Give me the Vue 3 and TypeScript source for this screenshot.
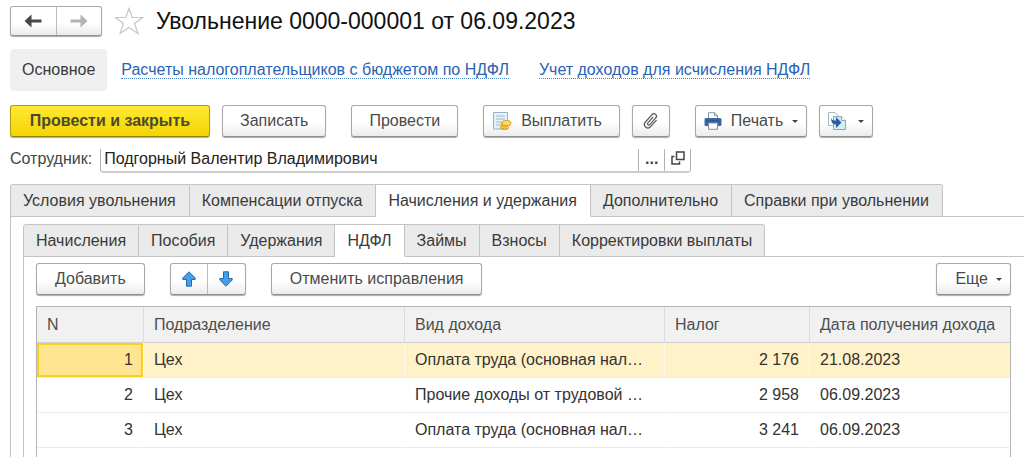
<script setup lang="ts">
import { ref } from 'vue'

interface IncomeRow {
  n: number
  department: string
  kind: string
  tax: string
  date: string
}

const employee = ref('Подгорный Валентир Владимирович')
const mainTabs = ['Условия увольнения', 'Компенсации отпуска', 'Начисления и удержания', 'Дополнительно', 'Справки при увольнении']
const subTabs = ['Начисления', 'Пособия', 'Удержания', 'НДФЛ', 'Займы', 'Взносы', 'Корректировки выплаты']
const activeMain = ref(2)
const activeSub = ref(3)
const selected = ref(1)

const rows: IncomeRow[] = [
  { n: 1, department: 'Цех', kind: 'Оплата труда (основная нал…', tax: '2 176', date: '21.08.2023' },
  { n: 2, department: 'Цех', kind: 'Прочие доходы от трудовой …', tax: '2 958', date: '06.09.2023' },
  { n: 3, department: 'Цех', kind: 'Оплата труда (основная нал…', tax: '3 241', date: '06.09.2023' },
]
</script>

<template>
  <div class="page">
    <header class="title-bar">
      <div class="pair nav">
        <button type="button" aria-label="Назад">
          <svg width="18" height="14" viewBox="0 0 18 14"><path d="M0.5 7 7.500 0.500V5.500H17.500V8.500H7.500V13.500Z" fill="#484848" /></svg>
        </button>
        <button type="button" aria-label="Вперед">
          <svg width="18" height="14" viewBox="0 0 18 14"><path d="M17.500 7 10.500 0.500V5.500H0.500V8.500H10.500V13.500Z" fill="#b3b3b3" /></svg>
        </button>
      </div>
      <button type="button" class="star" aria-label="В избранное">
        <svg width="30" height="28" viewBox="0 0 30 28"><path d="M15 1.500 18.200 10.500H28.500L20.500 16.500 24 26.500 15 20.500 6 26.500 9.500 16.500 1.500 10.500H11.800Z" fill="#fff" stroke="#c6c6c6" stroke-width="1.200" /></svg>
      </button>
      <h1>Увольнение 0000-000001 от 06.09.2023</h1>
    </header>

    <nav class="sections">
      <span class="current">Основное</span>
      <a href="#budget">Расчеты налогоплательщиков с бюджетом по НДФЛ</a>
      <a href="#income">Учет доходов для исчисления НДФЛ</a>
    </nav>

    <div class="toolbar">
      <button type="button" class="btn primary">Провести и закрыть</button>
      <button type="button" class="btn">Записать</button>
      <button type="button" class="btn post">Провести</button>
      <button type="button" class="btn pay">
        <svg width="20" height="20" viewBox="0 0 20 20">
          <path d="M1.500 1.500H15.500V18H1.500Z" fill="#e7f2f8" stroke="#91b4ca" />
          <path d="M4 5H13M4 8H13M4 11H10M4 14H8" stroke="#9bb9cc" />
          <ellipse cx="12.500" cy="16" rx="4.500" ry="3" fill="#dfa126" />
          <ellipse cx="13.500" cy="13.500" rx="5" ry="3" fill="#e9ad2b" />
          <ellipse cx="14.500" cy="12" rx="4.500" ry="2.500" fill="#ffd964" stroke="#dc9e24" />
          <path d="M9 15.500C11 17.500 14 17.500 17 15.500" fill="none" stroke="#ffe07d" />
        </svg>
        Выплатить
      </button>
      <button type="button" class="btn icon" aria-label="Присоединенные файлы">
        <svg width="20" height="20" viewBox="0 0 20 20"><path d="M13.500 6V14.500A3.500 3.500 0 0 1 6.500 14.500V4.500A2.500 2.500 0 0 1 11.500 4.500V13.500A1.300 1.300 0 0 1 8.900 13.500V6" transform="rotate(42 10 10)" fill="none" stroke="#555" stroke-width="1.200" stroke-linecap="round" /></svg>
      </button>
      <button type="button" class="btn print" aria-haspopup="menu">
        <svg width="18" height="18" viewBox="0 0 18 18">
          <path d="M4.500 7V.700H10.500L13.500 3.700V7" fill="#fff" stroke="#8199ab" />
          <path d="M10.500 .700V3.700H13.500" fill="none" stroke="#8199ab" />
          <rect x=".500" y="6" width="17" height="8" rx="1.500" fill="#3d69a0" />
          <path d="M2 9H16" stroke="#29527f" />
          <path d="M4.500 11H13.500V17.300H4.500Z" fill="#fff" stroke="#7992a8" />
        </svg>
        Печать
        <span class="caret"></span>
      </button>
      <button type="button" class="btn based" aria-label="Создать на основании" aria-haspopup="menu">
        <svg width="18" height="18" viewBox="0 0 18 18">
          <path d="M.500 .500H7L10 3.500V13.500H.500Z" fill="#fff" stroke="#a9b7c1" />
          <path d="M5.500 4.500H13.500L17.500 8.500V17.500H5.500Z" fill="#d6ebf5" stroke="#80aac2" />
          <path d="M13.500 4.500V8.500H17.500" fill="#fff" stroke="#80aac2" />
          <path d="M3 6C4 8.500 5.500 8.500 8 8.500V5L13.500 10.500 8 16V12.500C5 12.500 3 10.500 3 6Z" fill="#285f9c" />
        </svg>
        <span class="caret"></span>
      </button>
    </div>

    <div class="employee">
      <label for="employee">Сотрудник:</label>
      <div class="field">
        <input id="employee" v-model="employee" type="text" />
        <button type="button" class="dots" aria-label="Выбрать">...</button>
        <button type="button" aria-label="Открыть">
          <svg width="14" height="14" viewBox="0 0 14 14" fill="none" stroke="#444" stroke-width="1.500"><path d="M5.500 1H13V8.500H5.500ZM3.500 5.500H1V13H8.500V10.500" /></svg>
        </button>
      </div>
    </div>

    <div class="tabs main-tabs" role="tablist">
      <button v-for="(tab, i) in mainTabs" :key="tab" type="button" role="tab" :aria-selected="i === activeMain" :class="{ active: i === activeMain }" @click="activeMain = i">{{ tab }}</button>
    </div>
    <main class="panel">
      <div class="tabs" role="tablist">
        <button v-for="(tab, i) in subTabs" :key="tab" type="button" role="tab" :aria-selected="i === activeSub" :class="{ active: i === activeSub }" @click="activeSub = i">{{ tab }}</button>
      </div>
      <section class="panel inner">
        <div class="commands">
          <button type="button" class="btn">Добавить</button>
          <div class="pair move">
            <button type="button" aria-label="Переместить вверх">
              <svg width="14" height="16" viewBox="0 0 14 16"><path d="M7 .800 13.200 7V8.500H9.500V15.200H4.500V8.500H.800V7Z" fill="#479ee8" stroke="#2568aa" /></svg>
            </button>
            <button type="button" aria-label="Переместить вниз">
              <svg width="14" height="16" viewBox="0 0 14 16"><path d="M7 15.200 13.200 9V7.500H9.500V.800H4.500V7.500H.800V9Z" fill="#479ee8" stroke="#2568aa" /></svg>
            </button>
          </div>
          <button type="button" class="btn">Отменить исправления</button>
          <button type="button" class="btn more" aria-haspopup="menu">Еще <span class="caret"></span></button>
        </div>
        <div class="grid">
          <table>
            <colgroup><col class="c-n" /><col class="c-dep" /><col class="c-kind" /><col class="c-tax" /><col /></colgroup>
            <thead>
              <tr><th>N</th><th>Подразделение</th><th>Вид дохода</th><th>Налог</th><th>Дата получения дохода</th></tr>
            </thead>
            <tbody>
              <tr v-for="row in rows" :key="row.n" :class="{ selected: row.n === selected }" @click="selected = row.n">
                <td class="num">{{ row.n }}</td>
                <td>{{ row.department }}</td>
                <td>{{ row.kind }}</td>
                <td class="num">{{ row.tax }}</td>
                <td>{{ row.date }}</td>
              </tr>
            </tbody>
          </table>
        </div>
      </section>
    </main>
  </div>
</template>

<style>
body {
  margin: 0;
  background: #fff;
}
</style>

<style scoped>
.page {
  display: flex;
  flex-direction: column;
  box-sizing: border-box;
  min-height: 100vh;
  padding: 5px 0 0 10px;
  font: 16px/20px "Liberation Sans", Arial, sans-serif;
  color: #3a3a3a;
}
button,
input {
  box-sizing: border-box;
  margin: 0;
  font: inherit;
  color: inherit;
}
svg {
  display: block;
  flex: none;
}
.title-bar {
  display: flex;
  align-items: center;
  height: 32px;
}
h1 {
  margin: 0 0 0 12px;
  font-size: 23px;
  font-weight: 400;
  line-height: 32px;
  color: #111;
}
.star {
  margin-left: 12px;
  padding: 0;
  border: 0;
  background: none;
}
.pair,
.btn {
  box-sizing: border-box;
  display: flex;
  height: 32px;
  border: 1px solid #a9a9a9;
  border-bottom-color: #8f8f8f;
  border-radius: 3px;
  background: linear-gradient(#fff 55%, #ebebeb);
  box-shadow: 0 1px 1px #aaa;
}
.pair button {
  display: flex;
  align-items: center;
  justify-content: center;
  flex: 1;
  padding: 0;
  border: 0;
  background: none;
}
.pair button + button {
  border-left: 1px solid #bbb;
}
.nav {
  width: 92px;
  height: 30px;
}
.btn {
  align-items: center;
  justify-content: center;
  gap: 12px;
  padding: 0 17px;
  white-space: nowrap;
  color: #4a4a4a;
}
.primary {
  min-width: 200px;
  border-color: #b09a10;
  border-bottom-color: #94810c;
  background: linear-gradient(#ffe934, #f3d500);
  font-weight: 700;
  color: #4d4930;
}
.caret {
  border: 3px solid transparent;
  border-top-color: #444;
  border-bottom-width: 0;
}
.sections {
  display: flex;
  align-items: center;
  gap: 14px;
  margin-top: 12px;
}
.current {
  padding: 11px 12px;
  border-radius: 4px;
  background: #f0f0f0;
}
.sections a {
  border-bottom: 1px dotted #4d86c6;
  line-height: 17px;
  text-decoration: none;
  color: #2a63b4;
}
.sections a + a {
  margin-left: 16px;
}
.toolbar {
  display: flex;
  gap: 12px;
  margin-top: 14px;
}
.post,
.pay,
.print {
  margin-left: 13px;
}
.pay {
  gap: 9px;
  padding-left: 8px;
}
.icon {
  padding: 0 8px;
}
.print {
  gap: 9px;
  padding: 0 8px;
}
.based {
  padding: 0 8px;
}
.employee {
  display: flex;
  gap: 8px;
  margin-top: 12px;
  color: #444;
}
.field {
  display: flex;
  box-sizing: border-box;
  width: 591px;
  height: 24px;
  border: 1px solid #b0b0b0;
  border-top: 0;
  border-bottom: 2px solid #ccc;
  border-radius: 0 0 4px 4px;
}
.field input {
  flex: 1;
  min-width: 0;
  height: 20px;
  padding: 0 3px;
  border: 0;
  outline: 0;
  background: none;
  color: #222;
}
.field button {
  display: flex;
  justify-content: center;
  width: 26px;
  padding: 2px 0 0;
  border: 0;
  border-left: 1px solid #b0b0b0;
  background: none;
}
.field .dots {
  padding: 0;
  font-weight: 700;
}
.tabs {
  display: flex;
  height: 32px;
  border-bottom: 1px solid #c4c4c4;
}
.main-tabs {
  margin-top: 11px;
}
.tabs button {
  height: 33px;
  padding: 0 12px;
  border: 1px solid #c4c4c4;
  border-left-width: 0;
  background: #eaeaea;
  white-space: nowrap;
}
.main-tabs button {
  padding-right: 13px;
}
.tabs button:first-child {
  border-left-width: 1px;
  border-top-left-radius: 3px;
}
.tabs button:last-child {
  border-top-right-radius: 3px;
}
.tabs .active {
  border-bottom-color: #fff;
  background: #fff;
}
.panel {
  display: flex;
  flex: 1;
  flex-direction: column;
  padding: 7px 0 0 12px;
  border-left: 1px solid #c4c4c4;
}
.inner {
  padding: 6px 13px 0 12px;
}
.commands {
  display: flex;
}
.commands .btn {
  padding: 0 18px;
}
.move {
  width: 76px;
  margin: 0 25px;
}
.commands .more {
  gap: 8px;
  margin-left: auto;
  padding-right: 8px;
}
.grid {
  flex: 1;
  margin-top: 11px;
  border: 1px solid #b4b4b4;
  border-bottom: 0;
}
table {
  width: 100%;
  table-layout: fixed;
  border-collapse: separate;
  border-spacing: 0;
}
.c-n {
  width: 107px;
}
.c-dep {
  width: 261px;
}
.c-kind {
  width: 260px;
}
.c-tax {
  width: 145px;
}
th,
td {
  box-sizing: border-box;
  height: 35px;
  padding: 0 10px;
  border-bottom: 1px solid #ebebeb;
  text-align: left;
  white-space: nowrap;
}
th {
  height: 36px;
  border-right: 1px solid #dcdcdc;
  border-bottom-color: #d0d0d0;
  background: #f1f1f1;
  font-weight: 400;
  color: #4d4d4d;
}
th:last-child {
  border-right: 0;
  padding-right: 0;
}
td {
  border-right: 1px solid transparent;
  color: #333;
}
.num {
  text-align: right;
}
.selected td {
  border-right-color: #fffaf0;
  background: #fff2c8;
}
.selected td:last-child {
  border-right-color: transparent;
}
.selected td:first-child {
  background: #ffe491;
  box-shadow: inset 0 0 0 2px #fbce20;
}
</style>
